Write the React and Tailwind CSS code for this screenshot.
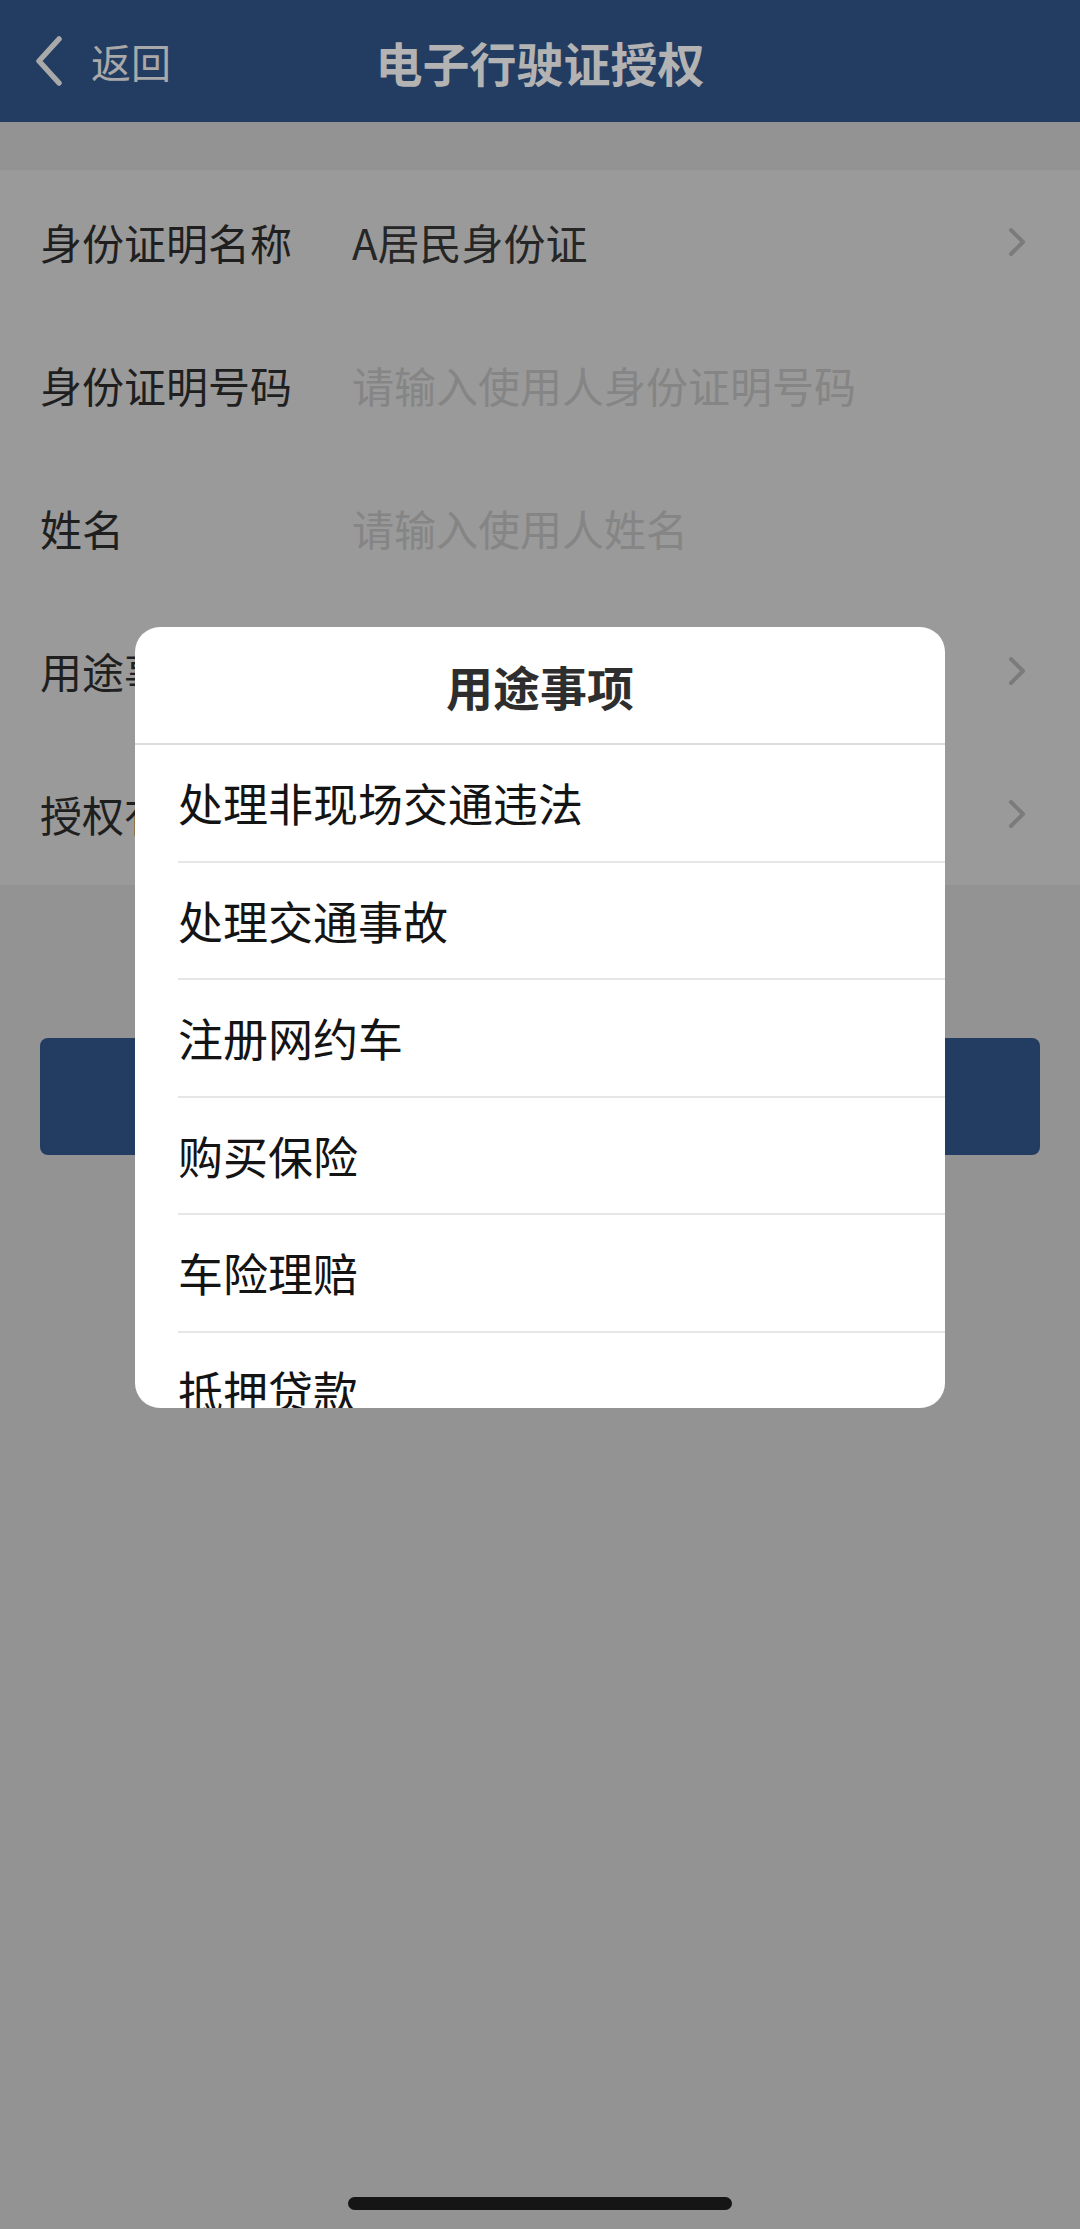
const FONT = { fontFamily: '"Noto Sans CJK SC", "Noto Sans", sans-serif' };

const rows = [
  { label: '身份证明名称', value: 'A居民身份证', arrow: true },
  { label: '身份证明号码', placeholder: '请输入使用人身份证明号码' },
  { label: '姓名', placeholder: '请输入使用人姓名' },
  { label: '用途事项', arrow: true },
  { label: '授权有效期', arrow: true },
];

const purposes = ['处理非现场交通违法', '处理交通事故', '注册网约车', '购买保险', '车险理赔', '抵押贷款'];

function Chevron({ className, color, width = 4 }) {
  return (
    <svg viewBox="0 0 18 30" className={className} fill="none">
      <path d="M3 3 L15 15 L3 27" stroke={color} strokeWidth={width} strokeLinecap="round" strokeLinejoin="round" />
    </svg>
  );
}

export default function App() {
  return (
    <div className="relative w-[1080px] h-[2229px] bg-[#939394] overflow-hidden" style={FONT}>
      {/* Nav bar */}
      <div className="h-[122px] bg-[#233c62] grid grid-cols-[1fr_auto_1fr] items-center">
        <div className="flex items-center pl-[35px] gap-[28px]">
          <svg viewBox="0 0 28 50" className="w-[28px] h-[50px]" fill="none">
            <path d="M24 3 L4 25 L24 47" stroke="#a9a9a9" strokeWidth="5.5" strokeLinecap="round" strokeLinejoin="round" />
          </svg>
          <span className="text-[40px] leading-none text-[#a9a9a9]">返回</span>
        </div>
        <h1 className="text-[47px] leading-none font-bold text-[#b3b3b3]">电子行驶证授权</h1>
        <div />
      </div>

      {/* Form */}
      <div className="mt-[48px] bg-[#9a9a9a]">
        {rows.map((r) => (
          <div key={r.label} className="h-[143px] flex items-center px-[40px]">
            <span className="w-[312px] shrink-0 text-[42px] leading-none text-[#1f1f1f]">{r.label}</span>
            <span className={`flex-1 text-[42px] leading-none ${r.value ? 'text-[#262626]' : 'text-[#858585]'}`}>
              {r.value || r.placeholder || ''}
            </span>
            {r.arrow && <Chevron className="w-[18px] h-[30px] mr-[14px]" color="#7b7b7b" />}
          </div>
        ))}
      </div>

      {/* Submit button (under mask) */}
      <div className="mx-[40px] mt-[153px] h-[117px] rounded-[8px] bg-[#233c62]" />

      {/* Picker dialog */}
      <div className="absolute left-[135px] top-[627px] w-[810px] h-[781px] rounded-[25px] bg-white overflow-hidden flex flex-col">
        <div className="h-[118px] shrink-0 flex items-center justify-center border-b-2 border-[#dcdcdc]">
          <span className="text-[47px] leading-none font-bold text-[#2e2e2e]">用途事项</span>
        </div>
        <div className="flex-1 overflow-hidden">
          {purposes.map((p) => (
            <div key={p} className="pl-[43px]">
              <div className="h-[117.5px] flex items-center border-b-2 border-[#e6e6e6]">
                <span className="text-[45px] leading-none text-[#141414]">{p}</span>
              </div>
            </div>
          ))}
        </div>
      </div>

      {/* Home indicator */}
      <div className="absolute left-[348px] bottom-[19px] w-[384px] h-[13px] rounded-full bg-[#151515]" />
    </div>
  );
}
